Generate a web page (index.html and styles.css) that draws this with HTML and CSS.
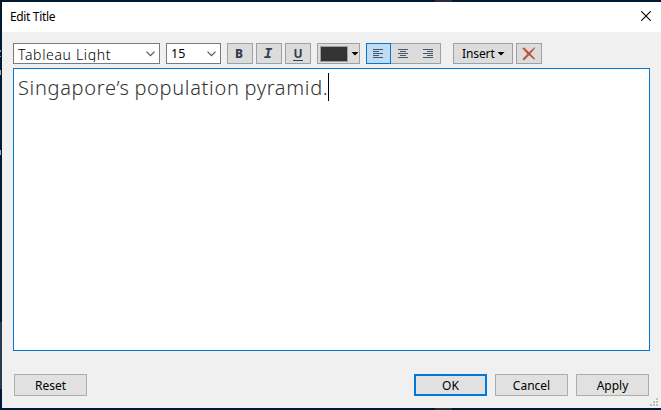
FILE: index.html
```html
<!DOCTYPE html>
<html lang="en">
<head>
<meta charset="utf-8">
<title>Edit Title</title>
<link rel="stylesheet" href="styles.css">
</head>
<body>
<main class="dialog">
  <header class="titlebar">
    <h1>Edit Title</h1>
    <svg class="close" width="10" height="10" viewBox="0 0 10 10"><path d="M.3.3l9.4 9.4M9.7.3L.3 9.7"/></svg>
  </header>
  <div class="toolbar">
    <div class="select font"><span>Tableau Light</span><svg class="chevron" width="9" height="6" viewBox="0 0 9 6"><path d="M.5.7l4 4 4-4"/></svg></div>
    <div class="select size"><span>15</span><svg class="chevron" width="9" height="6" viewBox="0 0 9 6"><path d="M.5.7l4 4 4-4"/></svg></div>
    <div class="styles">
      <div class="tool bold">B</div>
      <div class="tool italic">I</div>
      <div class="tool underline"><span>U</span></div>
    </div>
    <div class="color"><i class="swatch"></i><i class="arrow"></i></div>
    <div class="align">
      <div class="option active"><svg width="10" height="9" viewBox="0 0 10 9"><path d="M0 .5h10M0 2.5h6M0 4.5h10M0 6.5h6M0 8.5h10"/></svg></div>
      <div class="option"><svg width="10" height="9" viewBox="0 0 10 9"><path d="M0 .5h10M2 2.5h6M0 4.5h10M2 6.5h6M0 8.5h10"/></svg></div>
      <div class="option"><svg width="10" height="9" viewBox="0 0 10 9"><path d="M0 .5h10M4 2.5h6M0 4.5h10M4 6.5h6M0 8.5h10"/></svg></div>
    </div>
    <div class="insert"><span>Insert</span><i class="arrow"></i></div>
    <div class="tool clear"><svg width="14" height="14" viewBox="0 0 14 14"><path d="M.3 1.2Q1.5-.1 3 1.2L7 5.3 12.5.3l.7.7L8.4 6.8l4.8 5-.8 1L7 8.3 2 13.4.5 12 5.4 7z"/></svg></div>
  </div>
  <section class="editor"><span class="text">Singapore’s population pyramid.</span><i class="caret"></i></section>
  <footer class="actions">
    <div class="button reset">Reset</div>
    <div class="button ok">OK</div>
    <div class="button cancel">Cancel</div>
    <div class="button apply">Apply</div>
  </footer>
  <svg class="grip" width="8" height="8" viewBox="0 0 8 8"><path d="M6 0h2v2H6zM3 3h2v2H3zM6 3h2v2H6zM0 6h2v2H0zM3 6h2v2H3zM6 6h2v2H6z"/></svg>
</main>
</body>
</html>
```
FILE: styles.css
```css
* { box-sizing: border-box; }
body {
  margin: 0;
  height: 410px;
  padding: 2px 0 2px 2px;
  overflow: hidden;
  background:
    linear-gradient(#8b98a5, #8b98a5) 0 50px / 1px 2px no-repeat,
    linear-gradient(#8b98a5, #8b98a5) 0 56px / 1px 1px no-repeat,
    linear-gradient(#a4afba, #a4afba) 0 70px / 1px 5px no-repeat,
    linear-gradient(#a4afba, #a4afba) 0 150px / 1px 5px no-repeat,
    linear-gradient(#2b3a4c, #2b3a4c) 0 322px / 2px 67px no-repeat,
    linear-gradient(#2c2b38, #2c2b38) 435px 0 / 17px 100% no-repeat,
    #001a33;
  color: #000;
  font-family: "Noto Sans", sans-serif;
  font-size: 12px;
}
.dialog {
  position: relative;
  height: 406px;
  background: #f0f0f0;
  display: flex;
  flex-direction: column;
}
.titlebar {
  height: 30px;
  padding: 0 10px 0 8px;
  background: #fff;
  display: flex;
  align-items: center;
  justify-content: space-between;
}
h1 { margin: 0; font-size: 12px; line-height: 18px; font-weight: 400; letter-spacing: -.35px; }
.close { fill: none; stroke: #000; stroke-width: 1.1; margin-bottom: 2px; }
.toolbar { display: flex; height: 21px; margin: 11px 0 0 11px; }
.select {
  display: flex;
  align-items: center;
  justify-content: space-between;
  border: 1px solid #7a7a7a;
  background: #fff;
  overflow: hidden;
  padding: 0 4px;
}
.chevron { fill: none; stroke: #555; stroke-width: 1.2; }
.font { width: 147px; margin-right: 6px; }
.font span {
  height: 17px;
  line-height: 20px;
  overflow: hidden;
  font-size: 14px;
  font-weight: 300;
  letter-spacing: .65px;
}
.size { width: 55px; margin-right: 6px; }
.size span { font-size: 12.5px; }
.styles { display: flex; gap: 3px; margin-right: 6px; }
.tool {
  width: 26px;
  border: 1px solid #a0a0a0;
  background: #dcdcdc;
  color: #323e4f;
  display: flex;
  align-items: center;
  justify-content: center;
}
.bold { font-weight: 800; padding-right: 2px; }
.italic { font: italic bold 14px "Liberation Mono", monospace; padding-right: 2px; }
.underline { font-weight: 700; }
.underline span { height: 14px; line-height: 14px; border-bottom: 1px solid #323e4f; }
.color {
  width: 43px;
  margin-right: 6px;
  padding: 0 0 0 2px;
  border: 1px solid #a0a0a0;
  background: #dcdcdc;
  display: flex;
  align-items: center;
  gap: 3px;
}
.swatch { width: 28px; height: 16px; background: #333; border: 1px solid #a0a0a0; flex: none; }
.arrow { width: 8px; height: 4px; background: #000; clip-path: polygon(0 0, 100% 0, 50% 100%); flex: none; }
.align { width: 75px; margin-right: 12px; display: flex; background: #dcdcdc; border: 1px solid #a0a0a0; border-left: 0; }
.option { width: 25px; display: flex; align-items: center; justify-content: center; }
.option svg { stroke: #4b5668; stroke-width: 1; }
.active { margin: -1px 0; background: #bfdcf4; border: 1px solid #0078d7; }
.insert {
  width: 60px;
  margin-right: 3px;
  padding-left: 8px;
  border: 1px solid #a0a0a0;
  background: #dcdcdc;
  display: flex;
  align-items: center;
  gap: 1px;
}
.insert span { width: 34px; letter-spacing: -.1px; }
.clear svg { fill: #b85534; }
.editor {
  width: 637px;
  height: 283px;
  margin: 4px 0 0 11px;
  padding: 4px 0 0 4px;
  border: 1px solid #0078d7;
  background: #fff;
  display: flex;
}
.text {
  width: 310px;
  height: 30px;
  line-height: 29px;
  white-space: nowrap;
  color: #333;
  font-size: 20px;
  font-weight: 300;
  letter-spacing: .68px;
  word-spacing: -1px;
}
.caret { width: 1px; height: 28px; background: #000; }
.actions { display: flex; gap: 8px; margin: 23px 12px 0 12px; }
.button {
  width: 73px;
  height: 22px;
  border: 1px solid #adadad;
  background: #e1e1e1;
  display: flex;
  align-items: center;
  justify-content: center;
}
.reset { margin-right: auto; }
.ok { border: 2px solid #0078d7; }
.grip { position: absolute; right: 3px; bottom: 2px; fill: #bfbfbf; }
```
